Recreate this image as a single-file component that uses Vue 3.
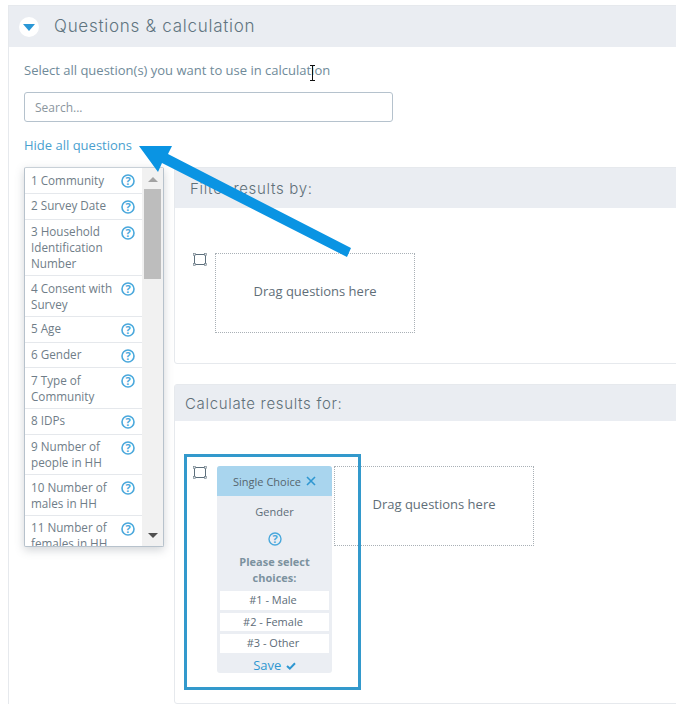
<script setup>
const questions = [
  '1 Community',
  '2 Survey Date',
  '3 Household Identification Number',
  '4 Consent with Survey',
  '5 Age',
  '6 Gender',
  '7 Type of Community',
  '8 IDPs',
  '9 Number of people in HH',
  '10 Number of males in HH',
  '11 Number of females in HH',
]
const choices = ['#1 - Male', '#2 - Female', '#3 - Other']
</script>

<template>
  <div class="page">
    <section class="panel">
      <header class="panel-head">
        <span class="toggle"><span class="caret"></span></span>
        <h2 class="panel-title">Questions &amp; calculation</h2>
      </header>
      <div class="panel-body">
        <p class="intro">Select all question(s) you want to use in calculation</p>
        <input class="search" type="text" placeholder="Search..." />
        <a class="hide-link">Hide all questions</a>
        <div class="columns">
          <aside class="qlist">
            <ul class="qitems">
              <li v-for="q in questions" :key="q" class="qitem">
                <span class="qtext">{{ q }}</span>
                <svg class="help" viewBox="0 0 14 14">
                  <circle cx="7" cy="7" r="6" fill="none" stroke="#4aa8dc" stroke-width="1.6" />
                  <text x="7" y="10.8" text-anchor="middle" class="help-mark">?</text>
                </svg>
              </li>
            </ul>
            <div class="scrollbar">
              <span class="arrow-up"></span>
              <span class="thumb"></span>
              <span class="arrow-down"></span>
            </div>
          </aside>
          <div class="cards">
            <section class="card card-filter">
              <h3 class="card-head filter-head">Filter results by:</h3>
              <div class="drop-row filter-row">
                <svg class="frame" viewBox="0 0 14 13">
                  <path d="M1.5 1.5H12.5V11.5H1.5Z" fill="none" stroke="#5d6f7c" stroke-width="1" />
                  <rect x=".5" y=".5" width="2" height="2" fill="#dfe3e6" stroke="#6d7d88" stroke-width=".6" />
                  <rect x="11.5" y=".5" width="2" height="2" fill="#dfe3e6" stroke="#6d7d88" stroke-width=".6" />
                  <rect x=".5" y="10.5" width="2" height="2" fill="#dfe3e6" stroke="#6d7d88" stroke-width=".6" />
                  <rect x="11.5" y="10.5" width="2" height="2" fill="#dfe3e6" stroke="#6d7d88" stroke-width=".6" />
                </svg>
                <div class="dropzone">Drag questions here</div>
              </div>
            </section>
            <section class="card card-calc">
              <h3 class="card-head calc-head">Calculate results for:</h3>
              <div class="drop-row calc-row">
                <svg class="frame calc-frame" viewBox="0 0 14 13">
                  <path d="M1.5 1.5H12.5V11.5H1.5Z" fill="none" stroke="#5d6f7c" stroke-width="1" />
                  <rect x=".5" y=".5" width="2" height="2" fill="#dfe3e6" stroke="#6d7d88" stroke-width=".6" />
                  <rect x="11.5" y=".5" width="2" height="2" fill="#dfe3e6" stroke="#6d7d88" stroke-width=".6" />
                  <rect x=".5" y="10.5" width="2" height="2" fill="#dfe3e6" stroke="#6d7d88" stroke-width=".6" />
                  <rect x="11.5" y="10.5" width="2" height="2" fill="#dfe3e6" stroke="#6d7d88" stroke-width=".6" />
                </svg>
                <div class="widget">
                  <div class="widget-head">
                    <span>Single Choice</span>
                    <svg class="close" viewBox="0 0 10 10">
                      <path d="M1 1L9 9M9 1L1 9" stroke="#2f97d1" stroke-width="1.6" fill="none" />
                    </svg>
                  </div>
                  <div class="widget-name">Gender</div>
                  <svg class="help widget-help" viewBox="0 0 14 14">
                    <circle cx="7" cy="7" r="6" fill="none" stroke="#4aa8dc" stroke-width="1.4" />
                    <text x="7" y="10.8" text-anchor="middle" class="help-mark">?</text>
                  </svg>
                  <div class="widget-prompt">Please select choices:</div>
                  <div class="choices">
                    <div v-for="c in choices" :key="c" class="choice">{{ c }}</div>
                  </div>
                  <div class="save">
                    Save
                    <svg class="check" viewBox="0 0 10 8">
                      <path d="M1 4L3.8 6.6L9 1.2" stroke="#2f97d1" stroke-width="2" fill="none" />
                    </svg>
                  </div>
                </div>
                <div class="dropzone calc-zone">Drag questions here</div>
                <div class="highlight"></div>
              </div>
            </section>
          </div>
        </div>
      </div>
    </section>

    <svg class="annot-arrow" viewBox="0 0 676 707">
      <polygon points="139,146 172,146 168,154 351,248 347,257 162,163 158,172" fill="#0a94e3" />
    </svg>
    <svg class="ibeam" viewBox="0 0 7 16">
      <path d="M1 .5H6M3.5 .5V15.5M1 15.5H6" stroke="#111" stroke-width="1" fill="none" />
    </svg>
  </div>
</template>

<style>
html, body { margin: 0; background: #fff; overflow: hidden; }
</style>

<style scoped>
.page {
  position: relative;
  width: 676px;
  height: 707px;
  overflow: hidden;
  box-sizing: border-box;
  padding: 5px 0 0 8px;
  font-family: "Open Sans", sans-serif;
  font-size: 12px;
  color: #5d6c78;
  background: #fff;
}
.panel { border-left: 1px solid #e6e9ed; border-top: 1px solid #e6e9ed; width: 700px; }
.panel-head {
  height: 41px;
  background: #eaedf2;
  display: flex;
  align-items: center;
  padding-left: 10px;
}
.toggle {
  width: 20px;
  height: 20px;
  border-radius: 50%;
  background: #fff;
  display: flex;
  align-items: center;
  justify-content: center;
}
.caret {
  width: 0;
  height: 0;
  margin-top: 2px;
  border-left: 6px solid transparent;
  border-right: 6px solid transparent;
  border-top: 7px solid #2a97d6;
}
.panel-title {
  margin: -2px 0 0 15px;
  font-family: "Inter", sans-serif;
  font-weight: 300;
  font-size: 17px;
  letter-spacing: 0.73px;
  color: #5f7480;
}
.panel-body { padding: 15px 0 0 15px; }
.intro {
  margin: -1px 0 0;
  font-size: 13px;
  line-height: 18px;
  color: #6f8a99;
}
.search {
  display: block;
  box-sizing: border-box;
  width: 369px;
  height: 30px;
  margin-top: 13px;
  padding: 0 10px;
  border: 1px solid #b5c2cd;
  border-radius: 3px;
  font-family: "Open Sans", sans-serif;
  font-size: 12px;
  outline: none;
}
.search::placeholder { color: #8b969e; opacity: 1; }
.hide-link {
  display: block;
  margin-top: 14px;
  font-size: 13px;
  line-height: 18px;
  color: #4a9fcf;
}
.columns { display: flex; margin-top: 13px; align-items: flex-start; }
.qlist {
  flex: none;
  box-sizing: border-box;
  width: 140px;
  height: 380px;
  display: flex;
  border: 1px solid #b7c2cc;
  border-top-color: #c8d0d7;
  border-radius: 2px;
  overflow: hidden;
  box-shadow: 0 3px 10px rgba(90, 100, 110, 0.28);
  background: #fff;
}
.qitems { flex: 1; min-width: 0; list-style: none; margin: 0; padding: 0; overflow: hidden; }
.qitem {
  box-sizing: border-box;
  min-height: 25.8px;
  display: flex;
  justify-content: space-between;
  align-items: flex-start;
  padding: 3.5px 7px 4.1px 6px;
  border-bottom: 1px solid #e5e8ec;
  line-height: 16px;
  font-size: 11.7px;
  color: #6f7d88;
}
.qtext { width: 84px; }
.help { flex: none; width: 14px; height: 14px; margin-top: 2.5px; margin-bottom: -3px; }
.help-mark {
  font-family: "Open Sans", sans-serif;
  font-size: 11px;
  font-weight: 700;
  fill: #4aa8dc;
}
.scrollbar {
  flex: none;
  position: relative;
  width: 21px;
  background: #f1f1f1;
  display: flex;
  flex-direction: column;
  align-items: center;
}
.arrow-up {
  margin-top: 9px;
  width: 0;
  height: 0;
  border-left: 5px solid transparent;
  border-right: 5px solid transparent;
  border-bottom: 5px solid #a3a3a3;
}
.thumb {
  margin-top: 7px;
  width: 17px;
  height: 90px;
  background: #bdbdbd;
}
.arrow-down {
  margin-top: auto;
  margin-bottom: 8px;
  width: 0;
  height: 0;
  border-left: 5px solid transparent;
  border-right: 5px solid transparent;
  border-top: 5px solid #505050;
}
.cards { margin-left: 10px; flex: none; width: 600px; display: flex; flex-direction: column; gap: 20px; }
.card { border: 1px solid #e6e9ed; border-radius: 3px; box-sizing: border-box; }
.card-filter { height: 197px; }
.card-calc { height: 320px; }
.card-head {
  margin: 0;
  background: #eaedf2;
  font-family: "Inter", sans-serif;
  font-weight: 300;
  font-size: 15px;
  letter-spacing: 0.67px;
  color: #5f7079;
  display: flex;
  align-items: center;
}
.filter-head { height: 40px; padding-left: 15px; }
.calc-head { height: 36px; padding-left: 10px; }
.drop-row { position: relative; display: flex; align-items: flex-start; }
.filter-row { padding: 45px 0 0 18px; }
.calc-row { padding: 45px 0 0 18px; }
.frame { flex: none; width: 14px; height: 13px; margin-right: 8px; }
.calc-frame { margin-right: 10px; }
.dropzone {
  box-sizing: border-box;
  flex: none;
  width: 200px;
  height: 80px;
  padding-bottom: 4px;
  border: 1px dotted #a9b0b6;
  display: flex;
  align-items: center;
  justify-content: center;
  font-size: 13px;
  color: #5f6e78;
}
.calc-zone { margin-left: 2px; }
.widget {
  flex: none;
  box-sizing: border-box;
  width: 115px;
  height: 207px;
  background: #ebeef3;
  border-radius: 3px;
  overflow: hidden;
  text-align: center;
  font-size: 11px;
}
.widget-head {
  height: 30px;
  background: #a9d5ee;
  display: flex;
  align-items: center;
  justify-content: center;
  gap: 5px;
  color: #55656f;
}
.close { width: 10px; height: 10px; }
.widget-name { margin-top: 8px; line-height: 16px; color: #5d6c78; }
.widget-help { display: block; margin: 12px auto 0; }
.widget-prompt {
  margin: 8px auto 0;
  width: 100px;
  font-weight: 700;
  line-height: 16px;
  color: #7c929f;
}
.choices { display: flex; flex-direction: column; gap: 3px; margin: 5px 3px 0; }
.choice {
  height: 18.5px;
  padding-right: 3px;
  background: #fff;
  line-height: 18.5px;
  color: #5d6c78;
}
.save {
  margin-top: 3px;
  font-size: 13px;
  line-height: 18px;
  color: #2f97d1;
}
.check { width: 10px; height: 8px; margin-left: 1px; }
.highlight {
  position: absolute;
  left: 9px;
  top: 33px;
  box-sizing: border-box;
  width: 177px;
  height: 236px;
  border: 3px solid #3399cc;
  pointer-events: none;
}
.annot-arrow {
  position: absolute;
  left: 0;
  top: 0;
  width: 676px;
  height: 707px;
  pointer-events: none;
}
.ibeam {
  position: absolute;
  left: 309px;
  top: 65px;
  width: 7px;
  height: 16px;
}
</style>
